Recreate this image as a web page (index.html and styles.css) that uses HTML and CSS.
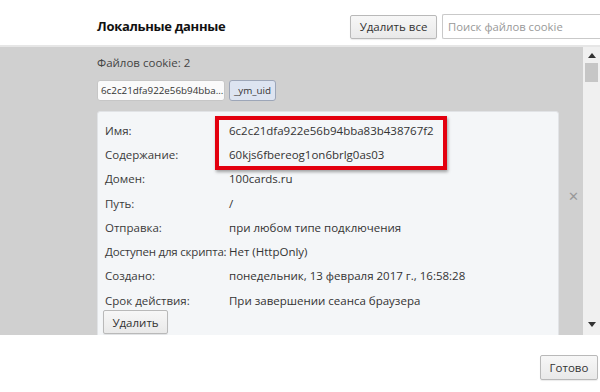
FILE: index.html
```
<!DOCTYPE html>
<html lang="ru">
<head>
<meta charset="utf-8">
<link rel="stylesheet" href="styles.css">
</head>
<body>
<div class="dialog">
  <header class="head">
    <h1 class="title">Локальные данные</h1>
    <div class="actions">
      <button class="btn btn-all">Удалить все</button>
      <div class="search">Поиск файлов cookie</div>
    </div>
  </header>
  <div class="body">
    <div class="pane">
      <div class="count">Файлов cookie: 2</div>
      <div class="chips">
        <span class="chip">6c2c21dfa922e56b94bba...</span>
        <span class="chip chip-sel">_ym_uid</span>
      </div>
      <div class="card">
        <div class="row"><span class="k">Имя:</span><span class="v">6c2c21dfa922e56b94bba83b438767f2</span></div>
        <div class="row"><span class="k">Содержание:</span><span class="v">60kjs6fbereog1on6brlg0as03</span></div>
        <div class="row"><span class="k">Домен:</span><span class="v">100cards.ru</span></div>
        <div class="row"><span class="k">Путь:</span><span class="v">/</span></div>
        <div class="row"><span class="k">Отправка:</span><span class="v">при любом типе подключения</span></div>
        <div class="row"><span class="k k-tight">Доступен для скрипта:</span><span class="v">Нет (HttpOnly)</span></div>
        <div class="row"><span class="k">Создано:</span><span class="v">понедельник, 13 февраля 2017 г., 16:58:28</span></div>
        <div class="row"><span class="k">Срок действия:</span><span class="v">При завершении сеанса браузера</span></div>
        <button class="btn btn-del">Удалить</button>
        <div class="mark"></div>
      </div>
      <span class="close">✕</span>
    </div>
    <div class="scroll">
      <svg class="arr" width="8" height="5" viewBox="0 0 8 5"><path d="M0 5L4 0L8 5Z" fill="#333"/></svg>
      <div class="thumb"></div>
      <div class="track"></div>
      <svg class="arr" width="8" height="5" viewBox="0 0 8 5"><path d="M0 0L8 0L4 5Z" fill="#333"/></svg>
    </div>
  </div>
  <footer class="foot">
    <button class="btn btn-done">Готово</button>
  </footer>
</div>
</body>
</html>
```
FILE: styles.css
```
* { box-sizing: border-box; }
html, body { margin: 0; padding: 0; background: #fff; }
body { font-family: "Open Sans", "Noto Sans", sans-serif; font-size: 11.5px; color: #333; }
.dialog { width: 600px; height: 392px; display: flex; flex-direction: column; overflow: hidden; }
.head { height: 47px; flex: none; display: flex; align-items: center; justify-content: space-between; padding: 4px 0 0 97px; border-bottom: 2px solid #e6e6e6; }
.title { margin: 0; font-size: 13px; font-weight: 700; color: #111; letter-spacing: -0.3px; padding-top: 2px; }
.actions { display: flex; gap: 5px; align-items: center; padding-top: 4px; }
.btn { font-family: inherit; font-size: 11.5px; color: #333; background: linear-gradient(#f7f7f7, #e9e9e9); border: 1px solid #b9b9b9; border-radius: 2px; padding: 0; box-shadow: 0 1px 1px rgba(0,0,0,0.08); }
.btn-all { width: 87px; height: 24px; }
.search { width: 158px; height: 25px; border: 1px solid #c9c9c9; border-right: none; border-radius: 2px 0 0 2px; padding: 4px 0 0 5px; color: #999; font-size: 11.3px; }
.body { height: 288px; flex: none; display: flex; }
.pane { flex: 1; background: #d0d0d0; padding: 8px 0 0 97px; position: relative; overflow: hidden; }
.count { color: #444; font-size: 11.5px; height: 17px; }
.chips { display: flex; gap: 4px; margin-top: 8px; }
.chip { height: 21px; border: 1px solid #c6c6c6; border-radius: 3px; background: #fafafa; padding: 3px 0 0 3px; font-size: 9.8px; color: #333; width: 128px; white-space: nowrap; overflow: hidden; }
.chip-sel { width: 47px; background: #dde4f1; border-color: #9da6b8; padding-left: 4px; }
.card { margin-top: 10px; width: 462px; height: 230px; background: #f4f6f8; border: 1px solid #e1e3e6; border-radius: 3px; padding: 6px 0 0 7px; position: relative; }
.row { display: flex; height: 24.3px; align-items: center; font-size: 11.5px; color: #333; }
.k { min-width: 124px; flex: none; white-space: nowrap; color: #3a3a3a; }
.k-tight { letter-spacing: -0.2px; }
.v { white-space: nowrap; color: #333; }
.btn-del { width: 65px; height: 24px; margin-top: -2px; margin-left: -2px; }
.mark { position: absolute; left: 117px; top: 4px; width: 232px; height: 54px; border: 4px solid #e3000f; box-shadow: 1px 2px 3px rgba(0,0,0,0.35); }
.close { position: absolute; left: 568px; top: 140px; font-size: 13px; color: #999; }
.scroll { width: 17px; flex: none; background: #f0f0f0; display: flex; flex-direction: column; align-items: center; padding: 6px 0 8px; }
.arr { flex: none; }
.thumb { width: 13px; height: 19px; margin-top: 5px; background: #c6c6c6; }
.track { flex: 1; }
.foot { flex: 1; display: flex; justify-content: flex-end; align-items: flex-start; padding-top: 20px; }
.btn-done { width: 58px; height: 25px; margin-right: 2px; }
```
